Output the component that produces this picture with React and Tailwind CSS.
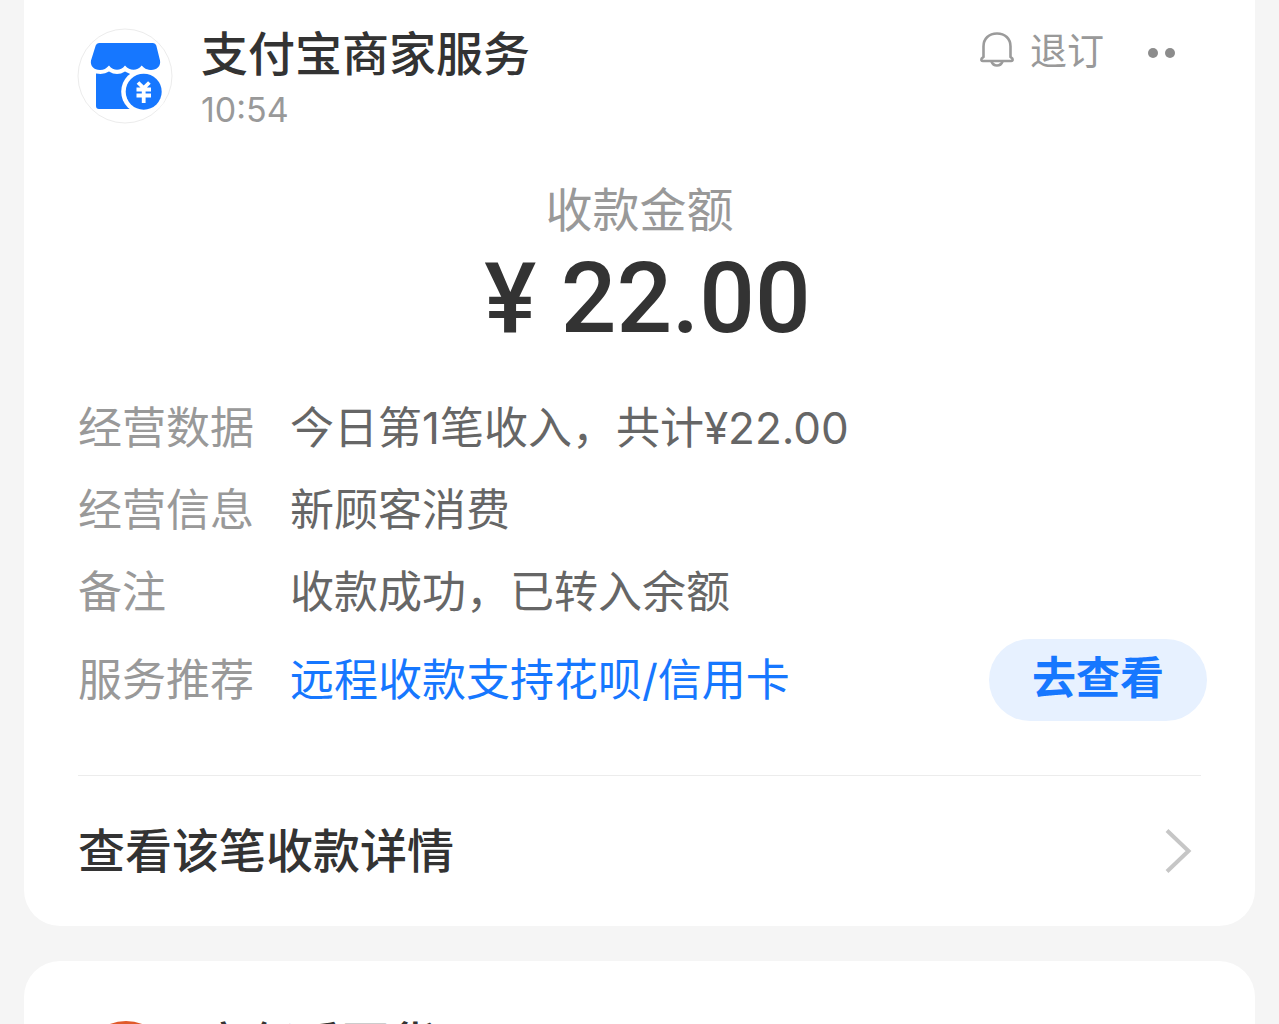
import React from "react";

const details = [
  { label: "经营数据", value: "今日第1笔收入，共计¥22.00" },
  { label: "经营信息", value: "新顾客消费" },
  { label: "备注", value: "收款成功，已转入余额" },
];

function ShopLogo() {
  return (
    <svg viewBox="0 0 96 96" className="size-24 shrink-0" aria-hidden="true">
      <circle cx="48" cy="48" r="47" fill="#fff" stroke="#ececec" />
      <path
        d="M22 15H76Q78.500 15 79.300 17.500L83 32.500C84 38 80 42 74 42C70 42 67.500 40.500 64.700 37.500C60 43.300 53 43.300 48 37.500C43.500 43.300 36.500 43.300 32 37.500C29 40.500 27 42 23 42C17 42 13 38 14 32.500L18.700 17.500Q19.500 15 22 15Z"
        fill="#1677ff"
      />
      <path
        d="M19 45.500Q27 47 32 43.500Q40 48.500 48 43.500Q53 47 60 46V81H22Q19 81 19 78Z"
        fill="#1677ff"
      />
      <circle cx="66.700" cy="63.700" r="22.500" fill="#fff" />
      <circle cx="66.700" cy="63.700" r="18" fill="#1677ff" />
      <path
        d="M61 54.500L66.700 60L72.400 54.500M59.500 61.500H74M59.500 67.500H74M66.700 59.500V75"
        fill="none"
        stroke="#fff"
        strokeWidth="3.800"
      />
    </svg>
  );
}

function StoreAvatar() {
  return (
    <svg viewBox="0 0 96 96" className="size-24 shrink-0" aria-hidden="true">
      <circle cx="49" cy="48" r="45" fill="#e05a2b" />
    </svg>
  );
}

function BellIcon() {
  return (
    <svg viewBox="0 0 34 36" className="h-9 w-[34px]" fill="none" stroke="#9b9b9b" strokeWidth="2.600" aria-hidden="true">
      <path d="M3.500 25V14.500C3.500 6.500 9 1.500 17 1.500s13.500 5 13.500 13V25l1.800 1.500q1 2.500-1.300 2.500H3q-2.300 0-1.300-2.500z" />
      <path d="M11.500 29.500c1 2.700 3 4 5.500 4s4.500-1.300 5.500-4" />
    </svg>
  );
}

function CardHeader({ avatar, title, time, children }) {
  return (
    <header className="flex items-start pl-[53px] pr-20">
      {avatar}
      <div className="ml-7 min-w-0 flex-1">
        <h2 className="text-[47px] leading-[52px] font-medium">{title}</h2>
        {time && <time className="mt-2 block text-[34px] leading-[44px] text-[#999]">{time}</time>}
      </div>
      {children}
    </header>
  );
}

function PaymentCard() {
  return (
    <article className="rounded-b-[36px] bg-white pt-7">
      <CardHeader avatar={<ShopLogo />} title="支付宝商家服务" time="10:54">
        <div className="flex h-11 items-center">
          <button type="button" className="flex items-center gap-4 text-[37px] leading-[44px] text-[#999]">
            <BellIcon />
            <span className="pt-1">退订</span>
          </button>
          <button type="button" aria-label="更多" className="ml-11 flex gap-[7px] pt-1.5">
            <span className="size-[10px] rounded-full bg-[#8c8c8c]" />
            <span className="size-[10px] rounded-full bg-[#8c8c8c]" />
          </button>
        </div>
      </CardHeader>

      <div className="mt-[53px] text-center">
        <p className="text-[47px] leading-[50px] text-[#999]">收款金额</p>
        <p className="pt-1 pl-4 font-['Roboto','Noto_Sans_CJK_SC',sans-serif] text-[98px] leading-[120px] font-medium">¥ 22.00</p>
      </div>

      <dl className="mt-7 pl-[54px] pr-12 text-[44px]">
        {details.map(({ label, value }) => (
          <div key={label} className="flex leading-[82px]">
            <dt className="w-[212px] shrink-0 text-[#999]">{label}</dt>
            <dd className="text-[#666]">{value}</dd>
          </div>
        ))}
        <div className="mt-1.5 flex items-center leading-[82px]">
          <dt className="w-[212px] shrink-0 text-[#999]">服务推荐</dt>
          <dd className="flex flex-1 items-center justify-between">
            <a href="#credit" className="text-[#1677ff]">远程收款支持花呗/信用卡</a>
            <button type="button" className="rounded-full bg-[#e7f1ff] px-[43px] pb-1 leading-[78px] font-bold text-[#1677ff]">
              去查看
            </button>
          </dd>
        </div>
      </dl>

      <div className="mt-[54px] pl-[54px] pr-[54px]">
        <a href="#detail" className="flex h-[151px] items-center justify-between border-t border-[#ececec] pr-2 text-[47px] font-medium">
          查看该笔收款详情
          <svg viewBox="0 0 28 44" className="h-11 w-7" fill="none" stroke="#c6c6c6" strokeWidth="4" aria-hidden="true">
            <path d="M2 1.500L23.500 22 2 42.500" />
          </svg>
        </a>
      </div>
    </article>
  );
}

export default function App() {
  return (
    <main className="flex h-screen flex-col gap-[35px] overflow-hidden bg-[#f5f5f5] px-6 font-['Inter','Noto_Sans_CJK_SC',sans-serif] text-[#333]">
      <PaymentCard />
      <article className="rounded-[36px] bg-white pt-[57px] pb-14">
        <CardHeader avatar={<StoreAvatar />} title="亲邻乐百货" />
      </article>
    </main>
  );
}
